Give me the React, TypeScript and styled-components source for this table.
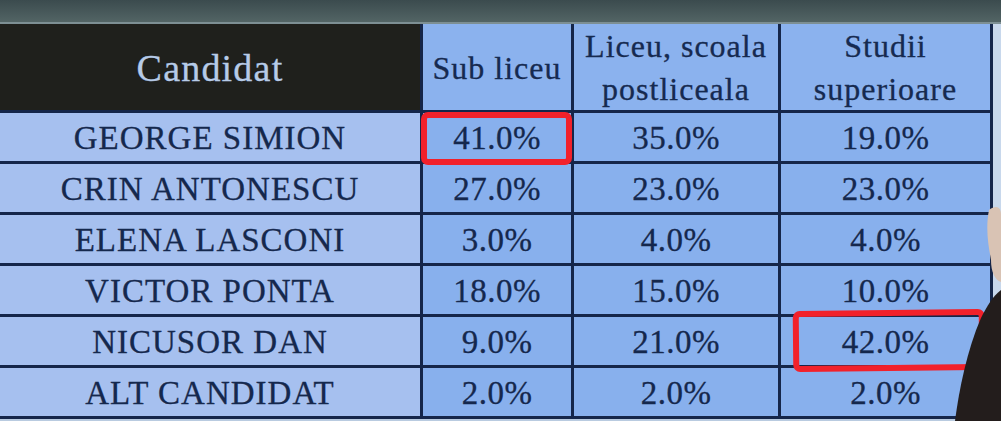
import React from "react";
import styled, { createGlobalStyle } from "styled-components";

const GlobalStyle = createGlobalStyle`
  html, body {
    margin: 0;
    padding: 0;
    background: #3f5053;
  }
`;

const Screen = styled.div`
  position: relative;
  width: 1001px;
  height: 421px;
  overflow: hidden;
  background: linear-gradient(180deg, #3b4b4e 0%, #566868 6%, #b9cbe0 7%);
  font-family: "Liberation Serif", "DejaVu Serif", serif;
  padding-top: 22px;
  box-sizing: border-box;
  display: flex;
`;

const Board = styled.div`
  display: flex;
  align-items: flex-start;
  border-top: 2px solid #7d8f93;
  width: 100%;
`;

const Grid = styled.div`
  display: grid;
  grid-template-columns: 420px 148px 204px 209px;
  grid-template-rows: 86px repeat(6, 48px);
  gap: 3px;
  background: #15264a;
  border-right: 3px solid #15264a;
  padding-bottom: 3px;
`;

const HeadCell = styled.div<{ $dark?: boolean }>`
  display: flex;
  align-items: center;
  justify-content: center;
  text-align: center;
  background: ${(p) => (p.$dark ? "#1f201c" : "#8bb2ee")};
  color: ${(p) => (p.$dark ? "#b6cbe8" : "#162a50")};
  font-size: ${(p) => (p.$dark ? "38px" : "32px")};
  letter-spacing: ${(p) => (p.$dark ? "1.2px" : "1px")};
  line-height: 43px;
  padding-top: 2px;
  -webkit-text-stroke: 0.3px currentColor;
`;

const Cell = styled.div<{ $name?: boolean }>`
  display: flex;
  align-items: center;
  justify-content: center;
  background: ${(p) => (p.$name ? "#a6c0ef" : "#88b0ed")};
  color: #15284d;
  font-size: 33px;
  letter-spacing: ${(p) => (p.$name ? "1px" : "0.5px")};
  padding-top: 2px;
  -webkit-text-stroke: 0.3px currentColor;
`;

const Side = styled.div`
  flex: 1;
  align-self: stretch;
  background: #c8d8ec;
`;

const Mark = styled.div<{ $tilt?: number }>`
  position: absolute;
  border: 6px solid #f2212b;
  border-radius: 7px;
  box-sizing: border-box;
  transform: rotate(${(p) => p.$tilt ?? 0}deg);
`;

const Figure = styled.svg`
  position: absolute;
  right: 0;
  top: 190px;
`;

const rows = [
  ["GEORGE SIMION", "41.0%", "35.0%", "19.0%"],
  ["CRIN ANTONESCU", "27.0%", "23.0%", "23.0%"],
  ["ELENA LASCONI", "3.0%", "4.0%", "4.0%"],
  ["VICTOR PONTA", "18.0%", "15.0%", "10.0%"],
  ["NICUSOR DAN", "9.0%", "21.0%", "42.0%"],
  ["ALT CANDIDAT", "2.0%", "2.0%", "2.0%"],
];

const App = () => {
  return (
    <>
      <GlobalStyle />
      <Screen>
        <Board>
          <Grid>
            <HeadCell $dark>Candidat</HeadCell>
            <HeadCell>Sub liceu</HeadCell>
            <HeadCell>
              Liceu, scoala
              <br />
              postliceala
            </HeadCell>
            <HeadCell>
              Studii
              <br />
              superioare
            </HeadCell>
            {rows.map((r) =>
              r.map((v, i) => (
                <Cell key={r[0] + i} $name={i === 0}>
                  {v}
                </Cell>
              ))
            )}
          </Grid>
          <Side />
        </Board>
        <Mark style={{ left: 421, top: 112, width: 151, height: 53 }} />
        <Mark $tilt={-0.6} style={{ left: 793, top: 310, width: 192, height: 61 }} />
        <Figure width="50" height="231" viewBox="0 0 50 231">
          <path d="M38 20 C46 14 50 18 50 24 L50 92 C44 90 40 82 40 70 C38 58 34 40 38 20 Z" fill="#d9c3b4" />
          <path d="M50 100 L50 231 L4 231 C8 200 16 160 30 128 C36 116 42 106 50 100 Z" fill="#231d1c" />
        </Figure>
      </Screen>
    </>
  );
};

export default App;
